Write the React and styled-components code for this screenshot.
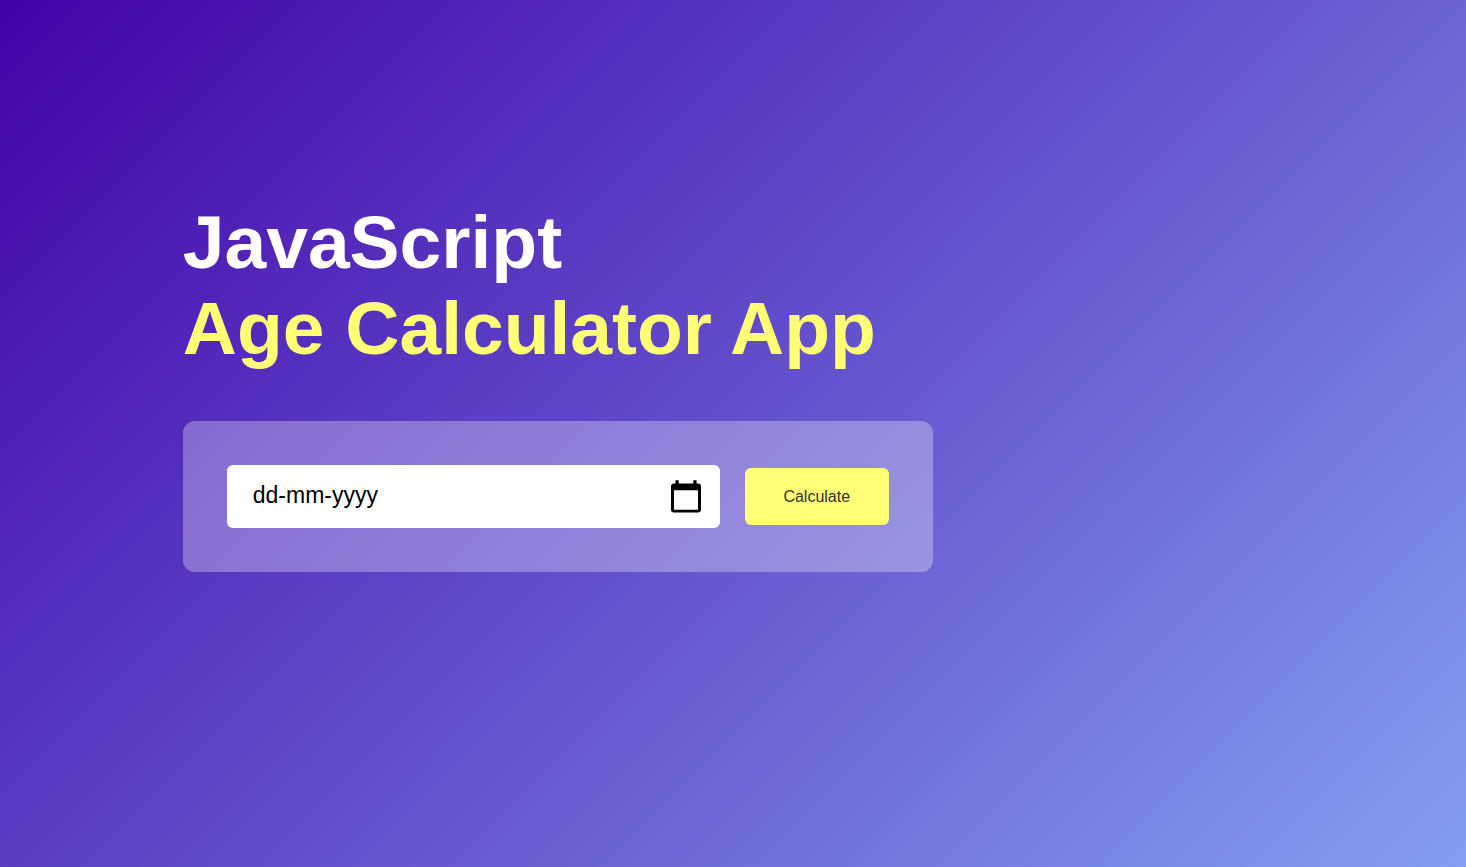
import React from "react";
import styled, { createGlobalStyle } from "styled-components";

const GlobalStyle = createGlobalStyle`
  * { box-sizing: border-box; margin: 0; padding: 0; font-family: "Liberation Sans", Arial, sans-serif; }
`;

const Page = styled.main`
  min-height: 100vh;
  padding: 1px 10px 10px;
  color: #fff;
  background: linear-gradient(135deg, #4203a9, #849ef0);
`;

const Calculator = styled.section`
  width: 100%;
  max-width: 750px;
  margin-top: 198px;
  margin-left: calc(12.5% - 8px);
`;

const Title = styled.h1`
  font-size: 75px;
  line-height: 86px;
`;

const Accent = styled.span`
  display: block;
  color: #ffff76;
`;

const InputBox = styled.form`
  display: flex;
  align-items: center;
  gap: 25px;
  margin-top: 50px;
  padding: 44px;
  border-radius: 12px;
  background: rgba(255, 255, 255, 0.3);
`;

const Field = styled.div`
  position: relative;
  flex: 1;
`;

const DateInput = styled.input`
  display: block;
  width: 100%;
  height: 63px;
  padding: 0 26px 2px;
  border: 0;
  outline: 0;
  border-radius: 6px;
  background: #fff;
  color: #000;
  font-size: 23px;

  &::placeholder { color: #000; opacity: 1; }
`;

const PickerButton = styled.button`
  position: absolute;
  top: 14px;
  right: 18px;
  width: 32px;
  height: 36px;
  border: 0;
  background: none;
  cursor: pointer;

  svg { display: block; }
`;

const CalculateButton = styled.button`
  height: 57px;
  width: 144px;
  border: 0;
  border-radius: 6px;
  background: #ffff76;
  color: #333;
  font-size: 16px;
  cursor: pointer;
`;

export default function App() {
  return (
    <>
      <GlobalStyle />
      <Page>
        <Calculator>
          <Title>
            JavaScript <Accent>Age Calculator App</Accent>
          </Title>
          <InputBox onSubmit={(e) => e.preventDefault()}>
            <Field>
              <DateInput type="text" aria-label="Date of birth" placeholder="dd-mm-yyyy" />
              <PickerButton type="button" aria-label="Show date picker">
                <svg width="32" height="36" viewBox="0 0 32 36">
                  <path
                    fillRule="evenodd"
                    d="M5.4 1.3h3.3v3.2h14.6V1.3h3.3v3.2h1.4a3 3 0 0 1 3 3v23a3 3 0 0 1-3 3H4a3 3 0 0 1-3-3v-23a3 3 0 0 1 3-3h1.4zM4 11.3v19.5h24V11.3z"
                  />
                </svg>
              </PickerButton>
            </Field>
            <CalculateButton type="submit">Calculate</CalculateButton>
          </InputBox>
        </Calculator>
      </Page>
    </>
  );
}
